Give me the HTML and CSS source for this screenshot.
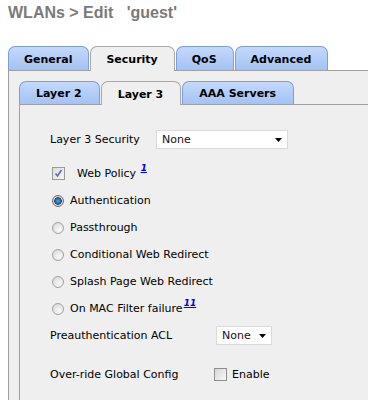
FILE: index.html
```html
<!DOCTYPE html>
<html lang="en">
<head>
    <meta charset="UTF-8">
    <title>WLANs &gt; Edit</title>
    <link rel="stylesheet" href="styles.css">
</head>
<body>
    <h1 class="title">WLANs &gt; Edit&nbsp;&nbsp;&nbsp;'guest'</h1>

    <div class="tabs tabs-outer">
        <span class="tab">General</span>
        <span class="tab active">Security</span>
        <span class="tab">QoS</span>
        <span class="tab">Advanced</span>
    </div>

    <div class="panel panel-outer">
        <div class="tabs tabs-inner">
            <span class="tab">Layer 2</span>
            <span class="tab active">Layer 3</span>
            <span class="tab">AAA Servers</span>
        </div>

        <div class="panel panel-inner">
            <div class="form">
                <div class="row">
                    <span class="label label-l3">Layer 3 Security</span>
                    <div class="select select-wide">
                        <span>None</span>
                        <svg width="7" height="4" viewBox="0 0 7 4"><path d="M0 0h7L3.5 4z" fill="#000"/></svg>
                    </div>
                </div>

                <div class="row row-policy">
                    <span class="check checked">
                        <svg width="11" height="11" viewBox="0 0 11 11"><path d="M2.5 5.5l2 2.5 4-6" fill="none" stroke="#5a6fae" stroke-width="1.6"/></svg>
                    </span>
                    <span class="text text-policy">Web Policy <a class="note">1</a></span>
                </div>

                <div class="row">
                    <span class="radio checked"></span>
                    <span class="text">Authentication</span>
                </div>
                <div class="row">
                    <span class="radio"></span>
                    <span class="text">Passthrough</span>
                </div>
                <div class="row">
                    <span class="radio"></span>
                    <span class="text">Conditional Web Redirect</span>
                </div>
                <div class="row">
                    <span class="radio"></span>
                    <span class="text">Splash Page Web Redirect</span>
                </div>
                <div class="row">
                    <span class="radio"></span>
                    <span class="text">On MAC Filter failure<a class="note">11</a></span>
                </div>

                <div class="row">
                    <span class="label label-acl">Preauthentication ACL</span>
                    <div class="select select-small">
                        <span>None</span>
                        <svg width="7" height="4" viewBox="0 0 7 4"><path d="M0 0h7L3.5 4z" fill="#000"/></svg>
                    </div>
                </div>

                <div class="row row-override">
                    <span class="label label-override">Over-ride Global Config</span>
                    <span class="check"></span>
                    <span class="text text-enable">Enable</span>
                </div>
            </div>
        </div>
    </div>
</body>
</html>
```

FILE: styles.css
```css
html, body {
    margin: 0;
    padding: 0;
    height: 400px;
    overflow: hidden;
    background: #fff;
    color: #000;
    font-family: 'DejaVu Sans', Verdana, sans-serif;
    font-size: 11px;
}

.title {
    margin: 0;
    padding: 4px 0 0 8px;
    height: 46px;
    box-sizing: border-box;
    font-family: 'Liberation Sans', Arial, sans-serif;
    font-size: 16px;
    line-height: 18px;
    font-weight: bold;
    color: #7a7a7a;
}

/* Tabs */
.tabs {
    display: flex;
    align-items: flex-end;
    gap: 1px;
    border-bottom: 1px solid #a0a0a0;
}
.tabs-outer {
    margin-left: 8px;
}

.tab {
    display: flex;
    align-items: center;
    box-sizing: border-box;
    height: 24px;
    padding: 1px 16px 0 15px;
    border: 1px solid #7b9fd6;
    border-bottom: none;
    border-radius: 7px 7px 0 0;
    background: linear-gradient(#c4d9fb, #a3c2f4);
    font-weight: bold;
    white-space: nowrap;
}
.tab.active {
    height: 25px;
    margin-bottom: -1px;
    padding-bottom: 1px;
    border-color: #a8a8a8;
    background: #efefef;
}
.tabs-inner .tab {
    height: 23px;
    padding: 1px 17px 0 16px;
}
.tabs-inner .tab.active {
    height: 24px;
}

/* Panels */
.panel {
    background: #efefef;
    border-left: 1px solid #a0a0a0;
}
.panel-outer {
    display: flex;
    flex-direction: column;
    box-sizing: border-box;
    margin-left: 8px;
    padding: 10px 0 0 10px;
    height: 329px;
}
.panel-inner {
    flex: 1;
    min-height: 0;
}

/* Form */
.form {
    display: flex;
    flex-direction: column;
    padding: 21px 0 0 30px;
}

.row {
    display: flex;
    align-items: center;
    height: 27px;
}
.row-policy {
    margin-top: 7px;
}
.row-override {
    margin-top: 12px;
}

.label-l3 { width: 106px; }
.label-acl { width: 166px; }
.label-override { width: 162px; }

.text {
    margin-left: 6px;
    white-space: nowrap;
}
.text-policy {
    margin-left: 12px;
}
.text-enable {
    margin-left: 5px;
}

.note {
    position: relative;
    top: -6px;
    margin-left: 1px;
    font-size: 9px;
    font-weight: bold;
    font-style: italic;
    color: #0000ee;
    text-decoration: underline;
    line-height: 0;
}

.select {
    display: flex;
    align-items: center;
    justify-content: space-between;
    box-sizing: border-box;
    height: 19px;
    padding: 0 5px 0 5px;
    background: #fff;
    border: 1px solid #dadada;
}
.select span {
    color: #1a0a1a;
}
.select-wide { width: 132px; }
.select-small { width: 56px; }

.check {
    display: inline-flex;
    align-items: center;
    justify-content: center;
    box-sizing: border-box;
    width: 13px;
    height: 13px;
    margin-left: 2px;
    border: 1px solid #8e8e8e;
    background: linear-gradient(135deg, #d6d6d6, #f8f8f8);
}
.check.checked {
    border-color: #9a9a9a;
    background: linear-gradient(135deg, #dedede, #f4f4f4);
}

.radio {
    box-sizing: border-box;
    width: 12px;
    height: 12px;
    margin-left: 2px;
    border: 1px solid #a2a2a2;
    border-radius: 50%;
    background: radial-gradient(circle at 65% 70%, #fafafa, #d4d4d4);
}
.radio.checked {
    border-color: #6d6d6d;
    background: radial-gradient(circle at 50% 50%, #4fa7e6 0, #1b6cb0 2.5px, #2a3e5a 3.5px, #e0e0e0 4px, #cfcfcf 6px);
}
```
